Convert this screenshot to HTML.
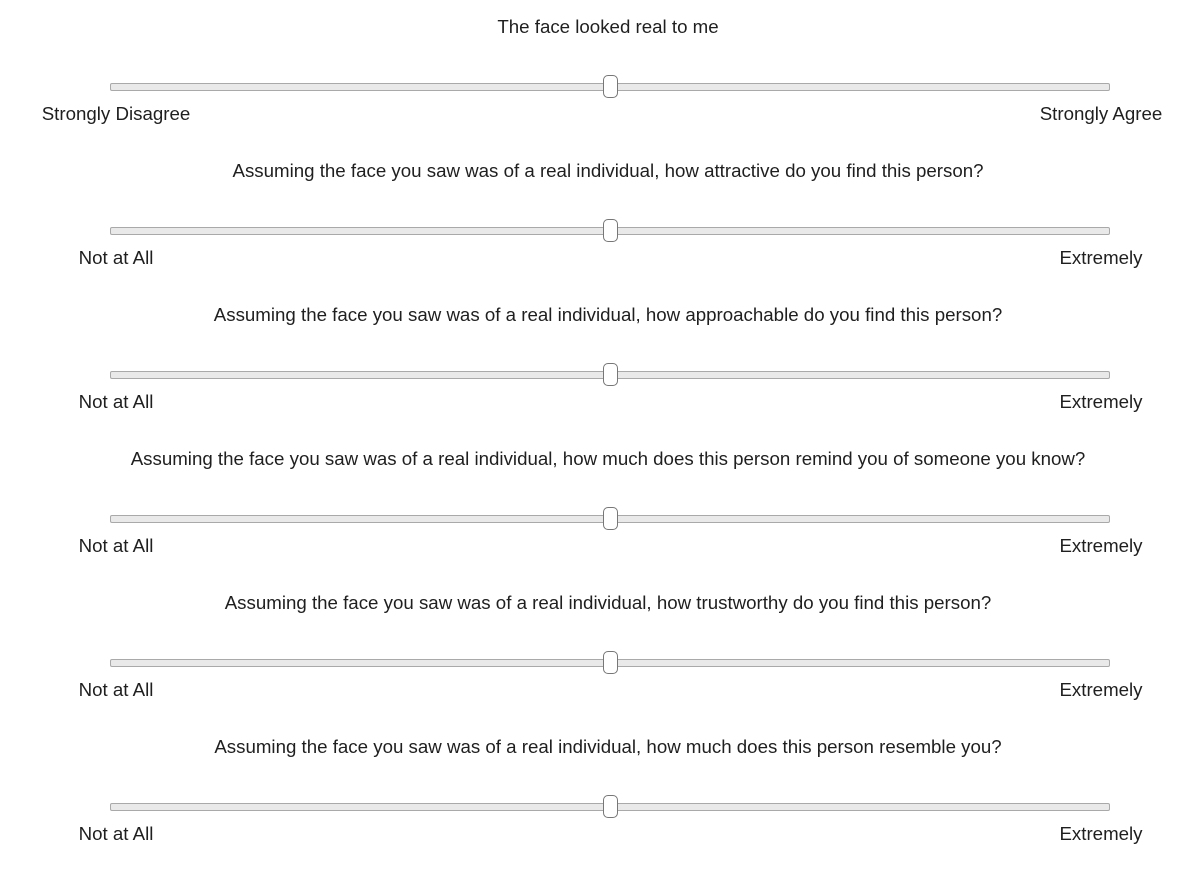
<!DOCTYPE html>
<html><head><meta charset="utf-8"><style>
body{margin:0;background:#fff;width:1204px;height:873px;position:relative;overflow:hidden;font-family:"Liberation Sans",sans-serif;font-size:18.7px;color:#1f1f1f}
.b{position:absolute;left:0;width:1204px;height:144px}
.q{position:absolute;top:17px;left:0;width:1216px;text-align:center;line-height:20px}
.t{position:absolute;left:110px;width:998px;top:83px;height:6px;background:#e9e9e9;border:1px solid #a9a9a9;border-radius:2px}
.h{position:absolute;left:603px;top:75px;width:13px;height:21px;background:#fff;border:1px solid #777;border-radius:5px}
.l{position:absolute;top:104px;width:200px;text-align:center;line-height:20px}
.l1{left:16px}.l2{left:1001px}
</style></head><body>
<div class="b" style="top:0"><div class="q">The face looked real to me</div><div class="t"></div><div class="h"></div><div class="l l1">Strongly Disagree</div><div class="l l2">Strongly Agree</div></div>
<div class="b" style="top:144px"><div class="q">Assuming the face you saw was of a real individual, how attractive do you find this person?</div><div class="t"></div><div class="h"></div><div class="l l1">Not at All</div><div class="l l2">Extremely</div></div>
<div class="b" style="top:288px"><div class="q">Assuming the face you saw was of a real individual, how approachable do you find this person?</div><div class="t"></div><div class="h"></div><div class="l l1">Not at All</div><div class="l l2">Extremely</div></div>
<div class="b" style="top:432px"><div class="q">Assuming the face you saw was of a real individual, how much does this person remind you of someone you know?</div><div class="t"></div><div class="h"></div><div class="l l1">Not at All</div><div class="l l2">Extremely</div></div>
<div class="b" style="top:576px"><div class="q">Assuming the face you saw was of a real individual, how trustworthy do you find this person?</div><div class="t"></div><div class="h"></div><div class="l l1">Not at All</div><div class="l l2">Extremely</div></div>
<div class="b" style="top:720px"><div class="q">Assuming the face you saw was of a real individual, how much does this person resemble you?</div><div class="t"></div><div class="h"></div><div class="l l1">Not at All</div><div class="l l2">Extremely</div></div>
</body></html>
